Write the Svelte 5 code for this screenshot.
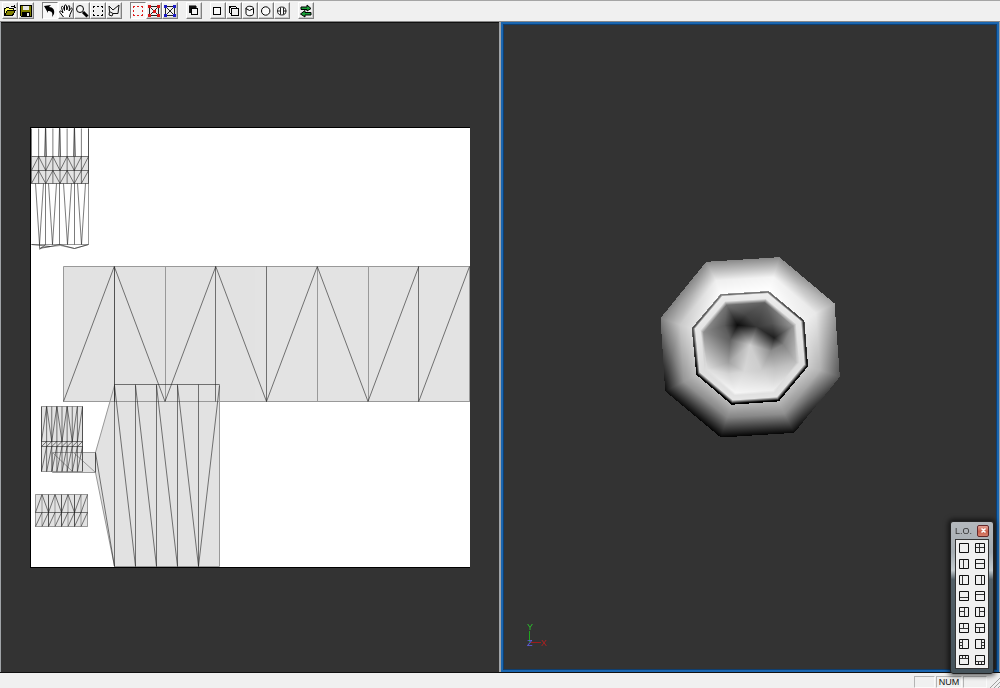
<script lang="ts">
  import { onMount } from "svelte";

  type Part = { d: string; fill?: string; stroke?: string; width?: number };
  type Tool = { name: string; pressed?: boolean; smooth?: boolean; parts: Part[] };
  type Vertex = [number, number, number];

  const dashes = "M3.5 3v2M3 3.5h2M7 3.5h2M11 3.5h2M12.5 3v2M12.5 7v2M12.5 11v2M11 12.5h2M7 12.5h2M3 12.5h2M3.5 11v2M3.5 7v2";
  const handles = "M2 2h3v3H2zM11 2h3v3h-3zM2 11h3v3H2zM11 11h3v3h-3z";
  const crossBox = "M3.5 3.5h9v9h-9zM3.5 3.5l9 9M12.5 3.5l-9 9";

  const groups: Tool[][] = [
    [
      {
        name: "Open",
        parts: [
          { d: "M2.5 12.5V5.5h1l1-1h2l1 1h4v2", fill: "#ffff66", stroke: "#000" },
          { d: "M2.5 12.5l3-5h8l-3 5z", fill: "#808000", stroke: "#000" },
          { d: "M9 3.5h3M12.5 2v3M14 4l-2 1", stroke: "#000" },
        ],
      },
      {
        name: "Save",
        parts: [
          { d: "M2.5 2.5h11v11h-10l-1-1z", fill: "#808000", stroke: "#000" },
          { d: "M5 3h6v4H5z", fill: "#e8e8e8" },
          { d: "M4 9h8v5H4z", fill: "#000" },
          { d: "M9 10h2v3H9z", fill: "#eee" },
        ],
      },
    ],
    [
      {
        name: "Select",
        pressed: true,
        smooth: true,
        parts: [{ d: "M2 3l7-1-2 2c4 0 6 3 5 7l-2 3c1-4 0-6-4-6l0 2z", fill: "#000" }],
      },
      {
        name: "Pan",
        smooth: true,
        parts: [
          {
            d: "M5.5 14L2 9.5C1 8 2.5 7.5 3.5 8.5L5 10 3.5 4.5C3.5 3 5 3 5.5 4.5L6.5 7.5 6.5 3C6.5 1.5 8.5 1.5 8.5 3L8.8 7 10 3.5C10.5 2 12 2.5 11.7 4L11 8 12.7 5.5C13.5 4.5 15 5.5 14 7L12 11.5 11.5 14",
            fill: "#fff",
            stroke: "#000",
          },
        ],
      },
      {
        name: "Zoom",
        smooth: true,
        parts: [
          { d: "M9 9l4.5 4.5", stroke: "#000", width: 3 },
          { d: "M2.5 6a3.5 3.5 0 1 0 7 0a3.5 3.5 0 1 0-7 0", fill: "#f4f4f4", stroke: "#000" },
        ],
      },
      { name: "Marquee", parts: [{ d: dashes, stroke: "#000" }] },
      {
        name: "Lasso",
        smooth: true,
        parts: [{ d: "M3 3l4 4 6-5-1 8.5H7L3.5 8.5zM3.5 8.5L3 12l3 1 1-2.5", stroke: "#111" }],
      },
    ],
    [
      { name: "Select vertices", pressed: true, parts: [{ d: dashes, stroke: "#e02020" }] },
      {
        name: "Select edges",
        parts: [
          { d: crossBox, stroke: "#222" },
          { d: handles + "M7 7h3v3H7z", fill: "#d81818" },
        ],
      },
      {
        name: "Select faces",
        parts: [
          { d: crossBox, stroke: "#222" },
          { d: handles, fill: "#1c1cc8" },
        ],
      },
    ],
    [
      {
        name: "Copy mapping",
        parts: [
          { d: "M3 3h7v7H3z", fill: "#111" },
          { d: "M3 2.5h7M10.5 3v3", stroke: "#777" },
          { d: "M5.5 5.5h6v6h-6z", fill: "#f4f4f4", stroke: "#000" },
        ],
      },
    ],
    [
      { name: "Planar", parts: [{ d: "M3.5 4.5h7v7h-7z", fill: "#fafafa", stroke: "#000" }] },
      {
        name: "Box",
        parts: [{ d: "M5.5 5.5h7v7h-7zM3.5 9.5v-6h6M3.5 3.5l2 2M9.5 3.5l2 2M3.5 9.5l2 2", fill: "none", stroke: "#000" }],
      },
      {
        name: "Cylinder",
        smooth: true,
        parts: [
          { d: "M4 5v5.5c0 3 7.5 3 7.5 0V5", fill: "#fafafa", stroke: "#000" },
          { d: "M4 5.5l3.5 2 4-2c0-3-7.5-3-7.5 0z", fill: "#fafafa", stroke: "#000" },
        ],
      },
      {
        name: "Sphere",
        smooth: true,
        parts: [{ d: "M3.5 8a4.2 4.2 0 1 0 8.4 0a4.2 4.2 0 1 0-8.4 0", fill: "#fafafa", stroke: "#000" }],
      },
      {
        name: "Shrink wrap",
        smooth: true,
        parts: [
          { d: "M3.5 8a4.2 4 0 1 0 8.4 0a4.2 4 0 1 0-8.4 0M6.5 4.5v7M9.5 4.5v7M3.5 8h3M9.5 8h3", fill: "#fafafa", stroke: "#222" },
        ],
      },
    ],
    [
      {
        name: "Swap",
        smooth: true,
        parts: [
          { d: "M3 4h6V2l4 3.5L9 8V6.5H3z", fill: "#18a038", stroke: "#000" },
          { d: "M13 9.5H7V7.5L2.5 11 7 14v-2h6z", fill: "#18a038", stroke: "#000" },
        ],
      },
    ],
  ];

  const layouts = [
    { name: "Single", d: "" },
    { name: "Four views", d: "M4.5 0v10M0 4.5h10" },
    { name: "Two columns", d: "M4.5 0v10" },
    { name: "Two rows", d: "M0 4.5h10" },
    { name: "Narrow left", d: "M3.5 0v10" },
    { name: "Narrow right", d: "M6.5 0v10" },
    { name: "Short bottom", d: "M0 6.5h10" },
    { name: "Short top", d: "M0 3.5h10" },
    { name: "Split left", d: "M5.5 0v10M0 4.5h5" },
    { name: "Split right", d: "M4.5 0v10M5 4.5h5" },
    { name: "Split top", d: "M0 5.5h10M4.5 0v5" },
    { name: "Split bottom", d: "M0 4.5h10M4.5 5v5" },
    { name: "Three left", d: "M3.5 0v10M0 3.5h3M0 6.5h3" },
    { name: "Three right", d: "M6.5 0v10M7 3.5h3M7 6.5h3" },
    { name: "Three top", d: "M0 3.5h10M3.5 0v3M6.5 0v3" },
    { name: "Three bottom", d: "M0 6.5h10M3.5 7v3M6.5 7v3" },
  ];

  // UV islands, in texture pixels
  function columns(x: number, w: number, n: number, top: number, bottom: number) {
    let d = "";
    for (let i = 0; i <= n; i++) d += `M${x + (w * i) / n} ${top}V${bottom}`;
    return d;
  }

  function zigzag(x: number, w: number, n: number, top: number, bottom: number) {
    let d = `M${x} ${bottom}`;
    for (let i = 1; i < n; i++) d += `L${x + (w * i) / n} ${i % 2 ? top : bottom}`;
    return d + `M${x + (w * (n - 1)) / n} ${bottom}L${x + w} ${top}`;
  }

  function slashes(x: number, w: number, n: number, top: number, bottom: number) {
    let d = "";
    for (let i = 0; i < n; i++) d += `M${x + (w * i) / n} ${bottom}L${x + (w * (i + 1)) / n} ${top}`;
    return d;
  }

  const fans = [84, 105, 126, 147].map((x) => `M${x} 258L${x + 21} 439`).join("") + "M189 258L168 439";
  const spikes = [9, 22, 37, 51].map((x) => `M${x - 4} 56L${x} 117L${x + 4} 56`).join("");
  const shafts = [15, 29, 44].map((x) => `M${x} 0L${x + 1} 29M${x} 0L${x - 1} 29`).join("");

  // Each ring lists x, y and the grey level of its eight corners.
  const outer: Vertex[] = [
    [168, 50, 138], [388, 36, 138], [553, 175, 165], [569, 395, 85],
    [432, 563, 8], [212, 577, 2], [45, 438, 12], [31, 219, 125],
  ];
  const ridge: Vertex[] = [
    [198, 106, 238], [370, 96, 244], [497, 204, 232], [510, 375, 178],
    [403, 506, 142], [231, 517, 132], [101, 409, 148], [90, 239, 200],
  ];
  const base: Vertex[] = [
    [212, 148, 252], [355, 139, 255], [461, 227, 240], [472, 363, 205],
    [385, 467, 185], [245, 477, 182], [140, 388, 190], [126, 250, 222],
  ];
  const rimShades = [170, 160, 80, 20, 0, 0, 10, 110];
  const lipShades = [236, 238, 232, 225, 228, 230, 224, 232];
  const wellShades = [112, 98, 150, 190, 238, 246, 222, 142];
  const floor: Vertex[] = [
    [262, 240, 12], [320, 245, 55], [372, 278, 30], [362, 318, 140],
    [333, 376, 205], [282, 380, 215], [235, 352, 160], [240, 284, 95],
  ];

  function inset(ring: Vertex[], scale: number, shades: number[], dy = 0): Vertex[] {
    return ring.map(([x, y], i) => [299 + (x - 299) * scale, 307 + dy + (y - 307) * scale, shades[i]]);
  }

  let canvas: HTMLCanvasElement;
  let current = "Single";

  function fillTriangle(image: ImageData, a: Vertex, b: Vertex, c: Vertex) {
    const area = (b[0] - a[0]) * (c[1] - a[1]) - (c[0] - a[0]) * (b[1] - a[1]);
    const minX = Math.floor(Math.min(a[0], b[0], c[0]));
    const maxX = Math.ceil(Math.max(a[0], b[0], c[0]));
    const minY = Math.floor(Math.min(a[1], b[1], c[1]));
    const maxY = Math.ceil(Math.max(a[1], b[1], c[1]));
    for (let y = minY; y <= maxY; y++) {
      for (let x = minX; x <= maxX; x++) {
        const u = ((x - a[0]) * (c[1] - a[1]) - (c[0] - a[0]) * (y - a[1])) / area;
        const v = ((b[0] - a[0]) * (y - a[1]) - (x - a[0]) * (b[1] - a[1])) / area;
        if (u < 0 || v < 0 || u + v > 1) continue;
        const at = (y * image.width + x) * 4;
        const shade = a[2] + u * (b[2] - a[2]) + v * (c[2] - a[2]);
        image.data[at] = image.data[at + 1] = image.data[at + 2] = shade;
        image.data[at + 3] = 255;
      }
    }
  }

  function fillBand(image: ImageData, a: Vertex[], b: Vertex[]) {
    a.forEach((p, i) => {
      const j = (i + 1) % a.length;
      // four triangles round the middle keep the shading even
      const mid = [0, 1, 2].map((k) => (p[k] + a[j][k] + b[i][k] + b[j][k]) / 4) as Vertex;
      fillTriangle(image, p, a[j], mid);
      fillTriangle(image, a[j], b[j], mid);
      fillTriangle(image, b[j], b[i], mid);
      fillTriangle(image, b[i], p, mid);
    });
  }

  onMount(() => {
    const ctx = canvas.getContext("2d");
    if (!ctx) return;
    const image = ctx.createImageData(canvas.width, canvas.height);
    const rim = inset(base, 0.99, rimShades.map((s) => s * 0.6));
    const lip = inset(base, 0.945, lipShades, -3);
    const edge = inset(base, 0.86, lipShades.map((s) => s - 4), -2);
    const well = inset(base, 0.8, wellShades);
    fillBand(image, outer, ridge);
    fillBand(image, ridge, inset(base, 1.01, base.map((v) => v[2])));
    fillBand(image, inset(base, 1.01, rimShades), rim);
    fillBand(image, rim, lip);
    fillBand(image, lip, edge);
    fillBand(image, edge, well);
    fillBand(image, well, floor);
    const centre: Vertex = [300, 300, 205];
    floor.forEach((p, i) => fillTriangle(image, p, floor[(i + 1) % 8], centre));
    ctx.putImageData(image, 0, 0);
  });
</script>

<div class="app">
  <header class="toolbar">
    {#each groups as group}
      <div class="group">
        {#each group as tool}
          <button type="button" class:pressed={tool.pressed} aria-label={tool.name}>
            <svg viewBox="0 0 16 16" class:smooth={tool.smooth}>
              {#each tool.parts as part}
                <path d={part.d} fill={part.fill ?? "none"} stroke={part.stroke ?? "none"} stroke-width={part.width ?? 1} />
              {/each}
            </svg>
          </button>
        {/each}
      </div>
    {/each}
  </header>

  <main>
    <section class="pane texture">
      <svg class="sheet" viewBox="0 0 440 441">
        <rect width="440" height="441" fill="#000" />
        <rect x="1" y="1" width="439" height="439" fill="#fff" />
        <g transform="translate(.5 .5)">
          <g class="island">
            <path d="M33 139H440V274H33z" />
            <path d="M84 257H189V439H84L65 345V325z" />
            <path d="M11 279H52V344H11zM5 367H57V399H5zM22 325H65V345H22z" />
            <path d="M1 29H58V56H1z" />
          </g>
          <g class="soft">
            <path d="M33 139H440M33 274H440M33 139V274M84 139V274M135 139V274M287 139V274M338 139V274M439 139V274" />
            <path d="M65 325L84 258M65 345L84 439M189 257V439M84 439H189M22 345V325H65V345H22M22 325L43 345M43 325L65 345" />
            <path d="M58 1V117M1 117H58M10 120L30 118L44 121L58 117" />
            <path d="M5 367H57V399H5zM11 279H52V344H11z" />
            <path d={columns(5, 52, 8, 367, 399)} />
          </g>
          <g class="wire">
            <path d={zigzag(33, 406, 8, 139, 274)} />
            <path d="M84 139V274M185 139V274M236 139V274M388 139V274" />
            <path d="M84 257H189M84 257V439M105 257V439M126 257V439M147 257V439M168 257V439M65 325V345M65 325L84 439" />
            <path d={fans} />
            <path d="M5 385H57M18 367V399M31 367V399M44 367V399" />
            <path d={zigzag(5, 52, 8, 367, 385) + slashes(5, 52, 8, 385, 399)} />
            <path d="M11 314H52M11 319H52" />
            <path d={columns(11, 41, 8, 279, 344)} />
            <path d={zigzag(11, 41, 8, 279, 314) + slashes(11, 41, 8, 314, 319) + slashes(11, 41, 8, 319, 344)} />
            <path d="M1 29H58M1 43H58M1 56H58" />
            <path d={columns(1, 57, 8, 1, 56)} />
            <path d="M15 56V117M29 56V117M44 56V117" />
            <path d={zigzag(1, 57, 8, 29, 43) + zigzag(1, 57, 8, 43, 56) + shafts} />
            <path d={spikes} />
            <path d="M1 117L20 119L29 117L44 121L58 117M9 122L15 117M9 117L9 121L20 119" />
          </g>
        </g>
      </svg>
    </section>

    <section class="pane model">
      <canvas bind:this={canvas} width="600" height="615"></canvas>
      <svg class="axes" viewBox="0 0 26 26">
        <path d="M4.5 8v11" stroke="#1fa51f" />
        <path d="M6 19.5h10" stroke="#9c1c1c" />
        <text x="2" y="7" fill="#2cc02c">Y</text>
        <text x="2" y="23" fill="#6060e8">Z</text>
        <text x="16" y="23" fill="#b02020">X</text>
      </svg>
    </section>

    <aside class="palette">
      <div class="title">
        <span>L.O.</span>
        <button type="button" aria-label="Close">
          <svg viewBox="0 0 5 5"><path d="M.5 .5l4 4M4.5 .5l-4 4" stroke="#fff" stroke-width="1.5" /></svg>
        </button>
      </div>
      <div class="layouts">
        {#each layouts as layout (layout.name)}
          <button
            type="button"
            aria-label={layout.name}
            aria-pressed={current === layout.name}
            on:click={() => (current = layout.name)}
          >
            <svg viewBox="-1 -1 12 12">
              <path d={layout.d} fill="none" stroke="#333" />
              <path d="M.5 .5h9v9h-9z" fill="none" stroke="#111" />
            </svg>
          </button>
        {/each}
      </div>
    </aside>
  </main>

  <footer>
    <span class="cell"></span>
    <span class="cell num">NUM</span>
    <span class="cell last"></span>
    <svg class="grip" viewBox="0 0 10 10"><path d="M0 10L10 0M4 10l6-6M8 10l2-2" stroke="#a0a0a0" /></svg>
  </footer>
</div>

<style>
  :global(body) {
    margin: 0;
    background: #f0f0f0;
  }

  .app {
    display: flex;
    flex-direction: column;
    height: 100vh;
    font-family: "Liberation Sans", Arial, sans-serif;
    color: #111;
  }

  button {
    padding: 0;
    border: none;
    background: none;
  }

  svg {
    display: block;
  }

  .toolbar {
    display: flex;
    gap: 8px;
    padding: 1px 2px 2px;
    background: #f0f0f0;
    border-top: 1px solid #a5a5a5;
    border-bottom: 1px solid #888;
  }

  .group {
    display: flex;
  }

  .group button {
    box-sizing: border-box;
    width: 16px;
    height: 17px;
    border: 1px solid #808080;
    border-top-color: #fff;
    border-left-color: #fff;
    background: #f0f0f0;
    box-shadow: inset -1px -1px 0 #c8c8c8;
  }

  .group button.pressed {
    border-color: #808080 #fff #fff #808080;
    background: #f8f8f8;
    box-shadow: none;
  }

  .group svg {
    width: 16px;
    height: 16px;
    margin: -1px;
    shape-rendering: crispEdges;
  }

  .group svg.smooth {
    shape-rendering: auto;
  }

  main {
    position: relative;
    flex: 1;
    display: grid;
    grid-template-columns: 1fr 1fr;
    gap: 2px;
    min-height: 0;
    padding: 0 1px;
    background: #a0a4a8;
    border-bottom: 1px solid #111;
  }

  .pane {
    display: flex;
    align-items: center;
    justify-content: center;
    min-width: 0;
    min-height: 0;
    background: #333;
  }

  .texture {
    padding: 0 29px;
    border-top: 1px solid #111;
  }

  .sheet {
    width: 100%;
  }

  .island {
    opacity: 0.11;
  }

  .soft {
    fill: none;
    stroke: #999;
  }

  .wire {
    fill: none;
    stroke: #222;
    stroke-opacity: 0.75;
    stroke-width: 0.8;
  }

  .model {
    position: relative;
    border: 2px solid #1a66b0;
    outline: 1px solid #0d3e70;
    outline-offset: -3px;
  }

  canvas {
    width: 200px;
    height: 205px;
  }

  .axes {
    position: absolute;
    left: 22px;
    bottom: 21px;
    width: 26px;
    height: 26px;
    font-size: 9px;
  }

  .palette {
    position: absolute;
    right: 6px;
    bottom: -2px;
    box-sizing: border-box;
    width: 44px;
    padding: 0 4px 4px;
    border: 1px solid #222;
    border-radius: 3px;
    background: linear-gradient(#b4b8bc, #a4acb2 20%, #c4ccd0 32%, #536068 38%, #46545c);
    box-shadow: 0 0 5px 2px rgba(0, 0, 0, 0.6);
  }

  .title {
    display: flex;
    align-items: center;
    justify-content: space-between;
    height: 17px;
    font-size: 9px;
    color: #333;
  }

  .title button {
    display: grid;
    place-items: center;
    width: 12px;
    height: 12px;
    border: 1px solid #63282a;
    border-radius: 2px;
    box-sizing: border-box;
    background: linear-gradient(#e4a094, #c8604c 55%, #d8806c);
  }

  .title svg {
    width: 5px;
    height: 5px;
  }

  .layouts {
    display: grid;
    grid-template-columns: 16px 16px;
    justify-content: center;
    background: #f0f0f0;
    border: 1px solid #333;
  }

  .layouts button {
    display: grid;
    place-items: center;
    height: 16px;
  }

  .layouts svg {
    width: 12px;
    height: 12px;
  }

  footer {
    display: flex;
    align-items: flex-end;
    justify-content: flex-end;
    gap: 1px;
    height: 15px;
    background: #f0f0f0;
  }

  .cell {
    box-sizing: border-box;
    width: 21px;
    height: 12px;
    border: 1px solid;
    border-color: #b4b4b4 #fafafa #fafafa #b4b4b4;
  }

  .num {
    width: 26px;
    font-size: 9px;
    line-height: 11px;
    text-align: center;
  }

  .last {
    width: 24px;
  }

  .grip {
    width: 10px;
    height: 10px;
    margin-left: 2px;
  }
</style>
